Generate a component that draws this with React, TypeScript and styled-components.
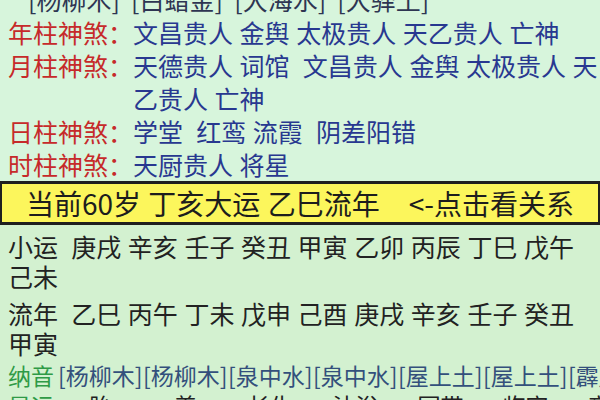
import React from 'react';
import styled, { createGlobalStyle } from 'styled-components';

const Global = createGlobalStyle`
  html, body { margin: 0; padding: 0; background: #d7f5dc; }
  body { font-family: "Noto Sans CJK SC", "Noto Sans", sans-serif; }
`;

const Page = styled.div`
  width: 600px;
  height: 400px;
  overflow: hidden;
  background: #d7f5dc;
  display: flex;
  flex-direction: column;
`;

const TopSection = styled.section`
  margin-top: -17px;
  font-size: 25px;
  line-height: 33px;
`;

const CutLine = styled.div`
  padding-left: 28px;
  color: #2e3552;
  white-space: pre;
`;

const ShaRow = styled.div`
  display: flex;
`;

const ShaLabel = styled.span`
  flex: none;
  padding-left: 8px;
  color: #c62a2a;
`;

const ShaValue = styled.span`
  flex: 1;
  min-width: 0;
  color: #283890;
  white-space: pre-wrap;
  word-spacing: 1px;
`;

const LuckBar = styled.div`
  flex: none;
  height: 38px;
  background: #fcf65c;
  border: 3px solid #1f1f1f;
  border-left-width: 2px;
  border-right-width: 2px;
  display: flex;
  align-items: center;
  justify-content: center;
  font-size: 28px;
  color: #1d1d1d;
  white-space: pre;
  word-spacing: 1px;
`;

const Lower = styled.section`
  flex: 1;
  background: #d3f1d0;
  padding: 6px 0 0 8px;
  font-size: 25px;
  line-height: 30px;
  color: #222222;
`;

const Block = styled.div<{ $gap: number }>`
  white-space: pre-wrap;
  word-break: keep-all;
  word-spacing: 1px;
  margin-bottom: ${(p) => p.$gap}px;
`;

const Grid = styled.div`
  display: grid;
  grid-template-columns: 50px repeat(7, 85px);
  white-space: nowrap;
  font-size: 23px;
  line-height: 30px;
`;

const GreenLabel = styled.span`
  color: #2f9a46;
`;

const NayinCell = styled.span`
  color: #33507c;
`;

const StageCell = styled.span`
  text-align: center;
  color: #222222;
`;

const sha = [
  { label: '年柱神煞：', value: '文昌贵人 金舆 太极贵人 天乙贵人 亡神' },
  { label: '月柱神煞：', value: '天德贵人 词馆  文昌贵人 金舆 太极贵人 天乙贵人 亡神' },
  { label: '日柱神煞：', value: '学堂  红鸾 流霞  阴差阳错' },
  { label: '时柱神煞：', value: '天厨贵人 将星' },
];

const nayin = ['杨柳木', '杨柳木', '泉中水', '泉中水', '屋上土', '屋上土', '霹雳火'];
const stages = ['胎', '养', '长生', '沐浴', '冠带', '临官', '帝旺'];

export default function App() {
  return (
    <>
      <Global />
      <Page>
        <TopSection>
          <CutLine>{'[杨柳木]  [白蜡金]  [大海水]  [大驿土]'}</CutLine>
          {sha.map((s) => (
            <ShaRow key={s.label}>
              <ShaLabel>{s.label}</ShaLabel>
              <ShaValue>{s.value}</ShaValue>
            </ShaRow>
          ))}
        </TopSection>
        <LuckBar>{'当前60岁 丁亥大运 乙巳流年    <-点击看关系'}</LuckBar>
        <Lower>
          <Block $gap={7}>{'小运  庚戌 辛亥 壬子 癸丑 甲寅 乙卯 丙辰 丁巳 戊午 己未'}</Block>
          <Block $gap={2}>{'流年  乙巳 丙午 丁未 戊申 己酉 庚戌 辛亥 壬子 癸丑 甲寅'}</Block>
          <Grid>
            <GreenLabel>纳音</GreenLabel>
            {nayin.map((n, i) => (
              <NayinCell key={i}>[{n}]</NayinCell>
            ))}
          </Grid>
          <Grid>
            <GreenLabel>星运</GreenLabel>
            {stages.map((s, i) => (
              <StageCell key={i}>{s}</StageCell>
            ))}
          </Grid>
        </Lower>
      </Page>
    </>
  );
}
